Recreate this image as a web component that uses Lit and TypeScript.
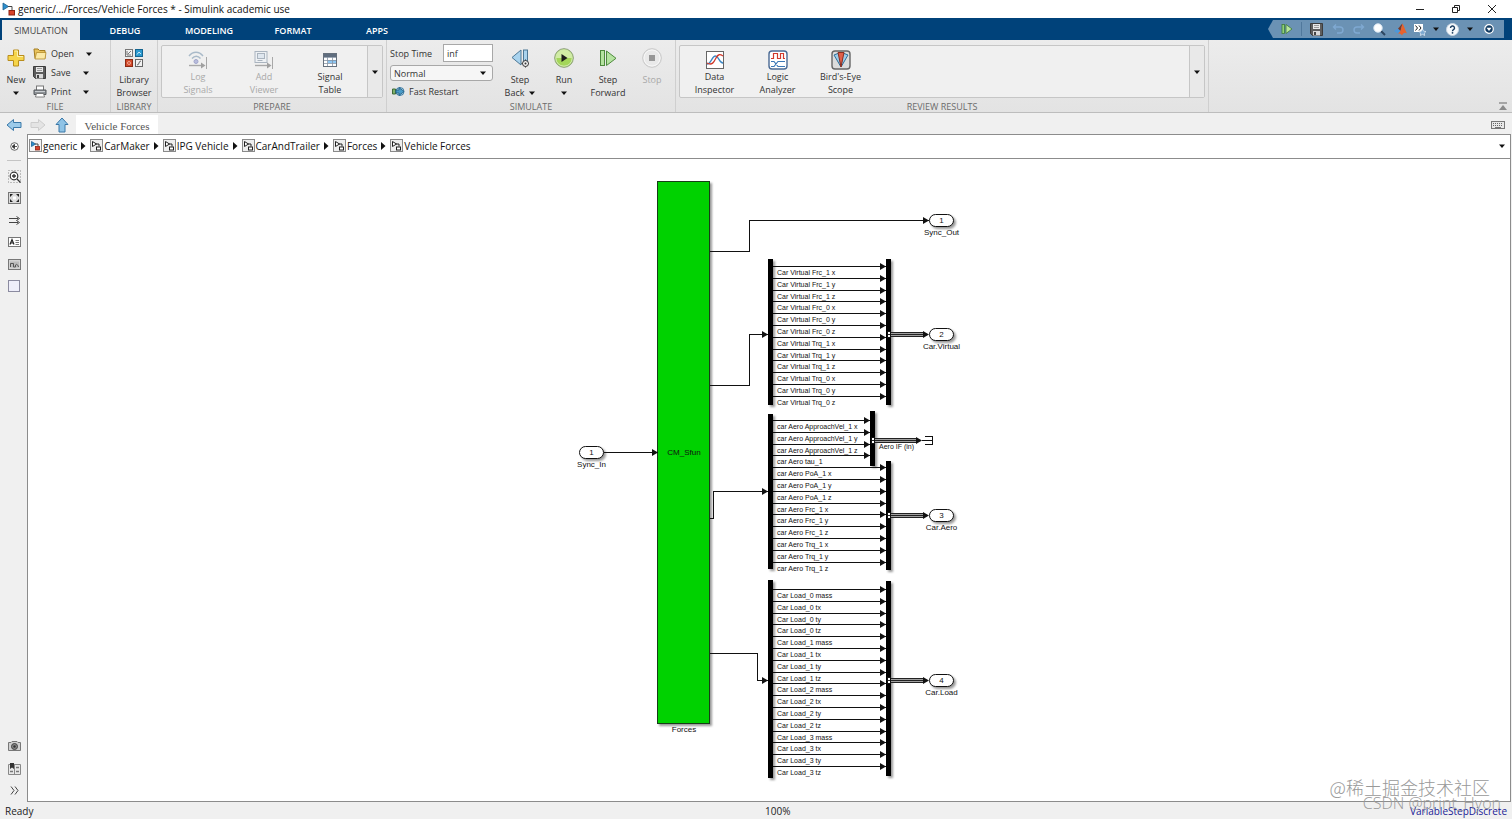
import { LitElement, html, svg, css, nothing, TemplateResult } from "lit";
import { customElement, property } from "lit/decorators.js";
import { classMap } from "lit/directives/class-map.js";

type Icon = { w: number; h: number; body: TemplateResult };

const block = svg`
  <rect x=".5" y=".5" width="12" height="12" fill="#eee" stroke="#8a8a8a"/>
  <path d="M2.500 2.500v5l4-2.500z" fill="#fff" stroke="#222"/>
  <path d="M6 5h3v2.500" fill="none" stroke="#222"/>
  <rect x="6.500" y="8" width="4" height="3" fill="#fff" stroke="#222"/>`;

const floppy = svg`
  <path d="M.5.5h12v12h-10l-2-2z" fill="#5d5d5d" stroke="#3c3c3c"/>
  <rect x="3" y="1" width="7" height="5" fill="#e8e8e8"/>
  <path d="M4 2.500h5M4 4.500h5" stroke="#9a9a9a"/>
  <rect x="3" y="8" width="7" height="4.500" fill="#d9d9d9"/>
  <rect x="4" y="9" width="2" height="3" fill="#444"/>`;

const icons: Record<string, Icon> = {
  app: { w: 14, h: 14, body: svg`
    <path d="M1 1v7l5.500-3.500z" fill="#2d8fce" stroke="#1d5f8d" stroke-width=".8"/>
    <path d="M6 4.500h4v4" fill="none" stroke="#444"/>
    <rect x="7" y="8.500" width="5.500" height="4.500" fill="#d9432a" stroke="#8d2413"/>` },
  minimize: { w: 10, h: 10, body: svg`<path d="M1 5.500h8" stroke="#222"/>` },
  restore: { w: 10, h: 10, body: svg`<path d="M1.500 3.500h5v5h-5zM3.500 3.500v-2h5v5h-2" fill="none" stroke="#222"/>` },
  close: { w: 10, h: 10, body: svg`<path d="M1 1l8 8M9 1l-8 8" stroke="#222"/>` },
  caret: { w: 6, h: 4, body: svg`<path d="M0 .5h6L3 4z" fill="#111"/>` },
  plus: { w: 18, h: 18, body: svg`
    <path d="M6.500 1h5v5.500H17v5h-5.500V17h-5v-5.500H1v-5h5.500z" fill="#f6d54a" stroke="#b98d1c"/>
    <path d="M7.500 2h3v5.500H16" fill="none" stroke="#fdf2ae"/>` },
  open: { w: 14, h: 12, body: svg`
    <path d="M1 1h4l1.500 1.500h5.500v8H2z" fill="#e9c35c" stroke="#a37c20"/>
    <path d="M3.500 4.500h9.500L12 11H2z" fill="#fbe9a6" stroke="#b48c2b" stroke-width=".8"/>` },
  save: { w: 13, h: 13, body: floppy },
  print: { w: 14, h: 13, body: svg`
    <rect x="3.500" y="1" width="7" height="5" fill="#fff" stroke="#777"/>
    <path d="M1 5h12v4.500H1z" fill="#8c9196" stroke="#55595d"/>
    <path d="M2 6.500h10" stroke="#c9cdd0"/>
    <path d="M3.500 8.500h7l1 3.500h-9z" fill="#fff" stroke="#666" stroke-width=".8"/>` },
  library: { w: 18, h: 18, body: svg`
    <rect x=".5" y=".5" width="7" height="7" fill="#f2f2f2" stroke="#777"/><path d="M2 2v4h4M3 5l3-3" stroke="#777" fill="none"/>
    <rect x="10.500" y=".5" width="7" height="7" fill="#2c9ad0" stroke="#14648f"/><path d="M12 5.500l2-2.500 2 2" stroke="#cdeaf8" fill="none"/>
    <rect x=".5" y="10.500" width="7" height="7" fill="#d2492a" stroke="#8b2913"/><circle cx="4" cy="14" r="1.500" fill="none" stroke="#f0a48f"/>
    <rect x="10.500" y="10.500" width="7" height="7" fill="#f2f2f2" stroke="#666"/><path d="M12 16c3 0 1-4 4-4" stroke="#666" fill="none"/>` },
  logSignals: { w: 20, h: 20, body: svg`
    <g fill="none" stroke="#a9bac9" stroke-width="1.400"><path d="M1 6c4-5 10-5 14 0M4 8.500c2.500-3 6-3 8.500 0"/></g>
    <circle cx="8" cy="11.500" r="2" fill="#b8bcdc" stroke="#a2a6cc"/>
    <path d="M1 15.500h12" stroke="#a8a8a8" stroke-width="1.400"/><path d="M13 12.500v6l4.500-3z" fill="#a0a0a0"/><path d="M18.500 7v12" stroke="#a8a8a8"/>` },
  addViewer: { w: 20, h: 20, body: svg`
    <rect x="1" y="1.500" width="12" height="11" fill="#eef1f4" stroke="#aab4bf"/>
    <rect x="3.500" y="3.500" width="7" height="5" fill="#dfe7ef" stroke="#aab4bf"/>
    <path d="M3.500 10.500h5" stroke="#aab4bf"/>
    <path d="M1 15.500h12" stroke="#a8a8a8" stroke-width="1.400"/><path d="M13 12.500v6l4.500-3z" fill="#a0a0a0"/><path d="M18.500 7v12" stroke="#a8a8a8"/>` },
  signalTable: { w: 14, h: 14, body: svg`
    <rect x=".5" y=".5" width="13" height="13" fill="#fff" stroke="#66707c"/>
    <rect x="1" y="1" width="12" height="3" fill="#5f6d7e"/>
    <rect x="5" y="7" width="8" height="3" fill="#8cc6f2"/>
    <path d="M1 4.500h12M1 7.500h12M1 10.500h12M4.500 4v9M9.500 4v9" stroke="#8694a4" stroke-width=".8"/>` },
  fastRestart: { w: 13, h: 11, body: svg`
    <path d="M.5 3h3v5h-3z" fill="#7fb069" stroke="#3f6b36"/>
    <circle cx="8" cy="5.500" r="4" fill="#bfdcec" stroke="#3d7ba3"/>
    <path d="M4 4h3V1.500l5 4-5 4V7H4z" fill="#4a9bc7" stroke="#1f5b80" stroke-width=".8"/>` },
  stepBack: { w: 18, h: 20, body: svg`
    <path d="M10 2v15L1 9.500z" fill="#a9d3ee" stroke="#4d7896"/>
    <rect x="12.500" y="2" width="4" height="15" fill="#a9d3ee" stroke="#4d7896"/>
    <circle cx="14.500" cy="15.500" r="3" fill="#eee" stroke="#333"/><circle cx="14.500" cy="15.500" r="1" fill="#333"/>
    <path d="M14.500 11.500v1M14.500 18.500v1M10.500 15.500h1M17.500 15.500h.5" stroke="#333"/>` },
  run: { w: 20, h: 20, body: svg`
    <circle cx="10" cy="10" r="9.300" fill="#a4d65a" stroke="#8a9a7a"/>
    <path d="M2 10a8 8 0 0 1 16 0z" fill="#e4f5c4" opacity=".7"/>
    <circle cx="10" cy="10" r="8.200" fill="none" stroke="#d5ecb4"/>
    <path d="M7.500 6v8l6-4z" fill="#1c1c1c"/>` },
  stepForward: { w: 18, h: 18, body: svg`
    <rect x="1.500" y="1.500" width="4" height="15" fill="#b5e3a0" stroke="#4f8a3e"/>
    <path d="M7.500 2v14.500L17 9.300z" fill="#b5e3a0" stroke="#4f8a3e"/>` },
  stop: { w: 20, h: 20, body: svg`
    <circle cx="10" cy="10" r="9.300" fill="#e9e9e9" stroke="#c6c6c6"/>
    <circle cx="10" cy="10" r="8" fill="none" stroke="#f7f7f7"/>
    <rect x="7" y="7" width="6" height="6" fill="#979797"/>` },
  dataInspector: { w: 18, h: 18, body: svg`
    <rect x=".5" y=".5" width="17" height="17" fill="#fff" stroke="#666"/>
    <path d="M1 13c4 0 5-8 8.500-8S13 12 17 12" fill="none" stroke="#3b86c4" stroke-width="1.300"/>
    <path d="M1 12c5 3 7-1 9-5s4-4 7-2" fill="none" stroke="#d0392b" stroke-width="1.300"/>` },
  logicAnalyzer: { w: 20, h: 20, body: svg`
    <rect x="1" y="1" width="18" height="18" rx="3" fill="#fff" stroke="#4a6a94" stroke-width="1.400"/>
    <path d="M3 8.500h2.500v-5h4v5h3v-5h3v5H17" fill="none" stroke="#d0392b" stroke-width="1.200"/>
    <path d="M3 11.500h3l4 5h7M3 16.500h3l4-5h7" fill="none" stroke="#3b78b8" stroke-width="1.200"/>` },
  birdsEye: { w: 20, h: 20, body: svg`
    <rect x="1" y="1" width="18" height="18" rx="3" fill="#dcdcdc" stroke="#666" stroke-width="1.400"/>
    <path d="M3 5l5-2 2 14z" fill="#9ccdea" stroke="#2d6f99"/><path d="M17 5l-5-2-2 14z" fill="#9ccdea" stroke="#2d6f99"/>
    <path d="M7 2.500h6L10 17z" fill="#e0604a" stroke="#8f2f20"/>` },
  qatPlay: { w: 12, h: 12, body: svg`
    <rect x="1" y="1.500" width="2.500" height="9" fill="#8fd07a" stroke="#3d7a38" stroke-width=".8"/>
    <path d="M5 1.500v9l6-4.500z" fill="#b8e69c" stroke="#3d7a38" stroke-width=".8"/>` },
  undo: { w: 12, h: 12, body: svg`<path d="M4 1.500L1.500 4 4 6.500M1.500 4H8a3 3 0 0 1 0 6H5" fill="none" stroke="#7fa9d2" stroke-width="1.400"/>` },
  redo: { w: 12, h: 12, body: svg`<path d="M8 1.500L10.500 4 8 6.500M10.500 4H4a3 3 0 0 0 0 6h3" fill="none" stroke="#7fa9d2" stroke-width="1.400"/>` },
  search: { w: 13, h: 13, body: svg`
    <path d="M7.500 7.500l4.500 4.500" stroke="#2c4660" stroke-width="2"/>
    <circle cx="5" cy="5" r="4.200" fill="#fff" stroke="#dbe7f2"/>` },
  matlab: { w: 13, h: 13, body: svg`
    <path d="M0 8l4-2.500L6.500 8 4 10.500z" fill="#4d97d8"/><path d="M4 5.500C6 4 7 1.500 8.500.5L6.500 8z" fill="#7a3a2a"/>
    <path d="M8.500.5c1.500 2 2.500 6.500 4.500 10-2-1.500-3.500-1-5 2-.8-1.500-2-2-4-2L6.500 8z" fill="#e8622c"/>` },
  shortcut: { w: 14, h: 13, body: svg`
    <rect x="1" y="1" width="9" height="8" fill="#fff"/>
    <path d="M2.500 2.500l2 2.500-2 2.500M6 2.500l2 2.500-2 2.500" fill="none" stroke="#222"/>
    <path d="M9.500 6l1.200 2.200 2.300.3-1.700 1.600.4 2.400-2.200-1.200-2.200 1.200.4-2.400L6 8.500l2.300-.3z" fill="#7aa7d0" stroke="#e8f0f8" stroke-width=".7"/>` },
  help: { w: 13, h: 13, body: svg`
    <circle cx="6.500" cy="6.500" r="6" fill="#f7fafc" stroke="#c9d6e2"/>
    <path d="M4.500 5a2 2 0 1 1 3 1.700c-.8.500-1 .8-1 1.500" fill="none" stroke="#1c3e60" stroke-width="1.400"/><circle cx="6.500" cy="9.800" r=".9" fill="#1c3e60"/>` },
  more: { w: 10, h: 10, body: svg`
    <circle cx="5" cy="5" r="4.300" fill="#123c63" stroke="#fff" stroke-width="1.200"/><path d="M2.500 3.800h5L5 7z" fill="#fff"/>` },
  collapse: { w: 8, h: 8, body: svg`<path d="M0 1h8" stroke="#8a8a8a" stroke-width="1.400"/><path d="M0 8h8L4 3z" fill="#8a8a8a"/>` },
  back: { w: 16, h: 14, body: svg`<path d="M1 7l6.500-5.500v3H15v5H7.500v3z" fill="#9ccbea" stroke="#3a78a8"/>` },
  forward: { w: 16, h: 14, body: svg`<path d="M15 7L8.500 1.500v3H1v5h7.500v3z" fill="#e4e4e4" stroke="#cdcdcd"/>` },
  up: { w: 14, h: 16, body: svg`<path d="M7 1l6 6.500h-3V15H4V7.500H1z" fill="#8fc3e6" stroke="#3a78a8"/>` },
  keyboard: { w: 14, h: 8, body: svg`
    <rect x=".5" y=".5" width="13" height="7" fill="#e8e8e8" stroke="#777"/>
    <path d="M2 2.500h10M2 4.500h10" stroke="#666" stroke-dasharray="1 1"/><path d="M4 6.500h6" stroke="#777"/>` },
  model: { w: 13, h: 13, body: svg`
    <rect x=".5" y=".5" width="12" height="12" fill="#f4f4f4" stroke="#8a8a8a"/>
    <path d="M2.500 2.500v5l4-2.500z" fill="#2d8fce" stroke="#1d5f8d" stroke-width=".8"/>
    <path d="M6 5h3v2" fill="none" stroke="#444"/>
    <rect x="6.500" y="7.500" width="4" height="3.500" fill="#d9432a" stroke="#8d2413" stroke-width=".8"/>` },
  block: { w: 13, h: 13, body: block },
  crumb: { w: 5, h: 8, body: svg`<path d="M0 0v8l4.500-4z" fill="#111"/>` },
  hide: { w: 9, h: 9, body: svg`<circle cx="4.500" cy="4.500" r="3.800" fill="#fff" stroke="#444" stroke-width=".8"/><path d="M4.500 2.300L2 4.500l2.500 2.200zM4 4.500h3" fill="#333" stroke="#333" stroke-width=".8"/>` },
  zoomIn: { w: 13, h: 13, body: svg`
    <path d="M.5.5h12v12H.5z" fill="none" stroke="#888" stroke-dasharray="1 2"/>
    <circle cx="6" cy="6" r="3.800" fill="#fff" stroke="#333" stroke-width="1.200"/><path d="M4 6h4M6 4v4M9 9l3.500 3.500" stroke="#333" stroke-width="1.300"/>` },
  fit: { w: 13, h: 12, body: svg`
    <rect x=".5" y=".5" width="12" height="11" fill="#dcdcdc" stroke="#777"/>
    <path d="M2 2h3L2 5zM11 2H8l3 3zM2 10h3L2 7zM11 10H8l3-3z" fill="#222"/><rect x="5" y="4.500" width="3" height="3" fill="#fff"/>` },
  route: { w: 13, h: 9, body: svg`<path d="M1 2.500h9M1 6.500h9" stroke="#444"/><path d="M8.500.5l3 2-3 2M8.500 4.500l3 2-3 2" fill="none" stroke="#444"/>` },
  annotation: { w: 13, h: 10, body: svg`
    <rect x=".5" y=".5" width="12" height="9" fill="#fff" stroke="#777"/>
    <path d="M2 7.500L4 2.500l2 5M2.800 6h2.400" fill="none" stroke="#222" stroke-width="1.200"/><path d="M7.500 3.500H11M7.500 5.500H11M7.500 7.500H11" stroke="#555" stroke-width=".8"/>` },
  image: { w: 13, h: 11, body: svg`
    <rect x=".5" y=".5" width="12" height="10" fill="#d4d4d4" stroke="#777"/><rect x="2" y="2.500" width="9" height="6" fill="#bbb"/>
    <path d="M2.500 8V4.500h3V8h2V6c1-1 2-1 3 2" fill="none" stroke="#555"/>` },
  area: { w: 12, h: 12, body: svg`<rect x=".5" y=".5" width="11" height="11" fill="#eeeefa" stroke="#8b8ba0"/>` },
  camera: { w: 13, h: 10, body: svg`
    <path d="M.5 1.500h2.500l1-1h5l1 1h2.500v8H.5z" fill="#d0d0d0" stroke="#777"/>
    <circle cx="6.500" cy="5.500" r="3" fill="#888" stroke="#444"/><circle cx="6.500" cy="5.500" r="1.200" fill="#333"/>` },
  explorer: { w: 13, h: 13, body: svg`
    <path d="M.5 2.500h12v10H.5z" fill="#e8e8e8" stroke="#888"/><path d="M6.500 3v9" stroke="#888"/>
    <path d="M2 1h4v6L4 5.500 2 7z" fill="#333"/><path d="M8 5.500h3M8 9.500h3M2 9.500h3" stroke="#777" stroke-width="1.400"/>` },
  expand: { w: 9, h: 9, body: svg`<path d="M1 .5l3 4-3 4M5 .5l3 4-3 4" fill="none" stroke="#444"/>` },
};

const icon = (name: string) => {
  const i = icons[name];
  return html`<svg class="icon" width=${i.w} height=${i.h} viewBox="0 0 ${i.w} ${i.h}" aria-hidden="true">${i.body}</svg>`;
};

const shared = css`
  :host { display: block; box-sizing: border-box; }
  *, *::before, *::after { box-sizing: border-box; }
  button, input, select { font: inherit; color: inherit; margin: 0; }
  button { display: flex; align-items: center; justify-content: center; padding: 0; border: 0; background: none; white-space: nowrap; }
  .icon { display: block; flex: none; }
`;

@customElement("title-bar")
class TitleBar extends LitElement {
  static styles = [shared, css`
    .bar { display: flex; align-items: center; height: 18px; padding: 0 2px 0 2px; background: #fff; color: #111; font-size: 10px; }
    .name { flex: 1; margin: 0 0 0 2px; font-size: 10px; font-weight: 400; line-height: 18px; }
    .control { width: 36px; height: 16px; }
  `];
  render() {
    return html`<header class="bar">
      ${icon("app")}
      <h1 class="name">generic/.../Forces/Vehicle Forces * - Simulink academic use</h1>
      ${[["minimize", "Minimize"], ["restore", "Restore"], ["close", "Close"]].map(([i, l]) =>
        html`<button class="control" aria-label=${l}>${icon(i)}</button>`)}
    </header>`;
  }
}

@customElement("tab-strip")
class TabStrip extends LitElement {
  static styles = [shared, css`
    .strip { display: flex; justify-content: space-between; height: 22px; padding: 2px 8px 0 2px; background: #00427a; }
    .tabs { display: flex; gap: 6px; }
    .tab { width: 78px; height: 20px; color: #fff; font-weight: 600; }
    .tab.active { background: #ececec; color: #444; font-weight: 400; }
    .quick { display: flex; align-items: center; height: 18px; padding: 0 3px 0 8px; background: #6b92b4; clip-path: polygon(5px 0, 100% 0, 100% 100%, 5px 100%, 0 50%); }
    .tool { width: 21px; height: 18px; }
    .tool.small { width: 18px; }
    .tool.wide { width: 25px; }
    .tool.drop { width: 13px; }
    .rule { width: 1px; height: 14px; margin: 0 4px; background: #50789c; }
  `];
  render() {
    const tool = (i: string, label: string, size = "") =>
      html`<button class="tool ${size}" aria-label=${label}>${icon(i)}</button>`;
    return html`<div class="strip">
      <nav class="tabs">
        ${["SIMULATION", "DEBUG", "MODELING", "FORMAT", "APPS"].map((t, n) =>
          html`<button class=${classMap({ tab: true, active: n === 0 })}>${t}</button>`)}
      </nav>
      <div class="quick">
        ${tool("qatPlay", "Step forward")}<span class="rule"></span>
        ${tool("save", "Save")}${tool("undo", "Undo")}${tool("redo", "Redo")}${tool("search", "Search")}
        ${tool("matlab", "MATLAB")}${tool("shortcut", "Shortcuts", "small")}${tool("caret", "Shortcut menu", "drop")}
        ${tool("help", "Help")}${tool("caret", "Help menu", "drop")}${tool("more", "More", "wide")}
      </div>
    </div>`;
  }
}

@customElement("tool-button")
class ToolButton extends LitElement {
  @property() icon = "";
  @property() label = "";
  @property({ type: Boolean }) menu = false;
  @property({ type: Boolean }) inline = false;
  @property({ type: Boolean }) disabled = false;
  static styles = [shared, css`
    button { flex-direction: column; justify-content: flex-start; width: 100%; line-height: 13px; }
    .picture { display: flex; align-items: center; justify-content: center; height: 20px; margin-bottom: var(--picture-gap, 0); }
    .line { display: flex; align-items: center; gap: 5px; height: 13px; }
    button:disabled { color: #a9a9a9; }
  `];
  render() {
    const lines = this.label.split("|");
    return html`<button ?disabled=${this.disabled}>
      <span class="picture">${icon(this.icon)}</span>
      ${lines.map((l, n) => html`<span class="line">${l}${this.inline && n === lines.length - 1 ? icon("caret") : nothing}</span>`)}
      ${this.menu ? html`<span class="line">${icon("caret")}</span>` : nothing}
    </button>`;
  }
}

@customElement("ribbon-bar")
class RibbonBar extends LitElement {
  static styles = [shared, css`
    .ribbon { display: flex; height: 73px; background: linear-gradient(#ececec, #e3e3e3); border-bottom: 1px solid #bdbdbd; color: #333; }
    .group { display: flex; flex-direction: column; border-right: 1px solid #cfcfcf; }
    .content { display: flex; height: 62px; --picture-gap: 5px; }
    .label { margin: 0; font-size: 9px; font-weight: 400; line-height: 11px; text-align: center; color: #6c6c6c; }
    .file { width: 111px; }
    .library { width: 47px; }
    .prepare { width: 229px; }
    .simulate { width: 289px; }
    .review { flex: 0 1 533px; }
    .big { padding-top: 8px; }
    .new { width: 32px; }
    .rows { display: flex; flex-direction: column; padding-top: 4px; }
    .row { display: flex; align-items: center; height: 19px; }
    .command { justify-content: flex-start; gap: 4px; width: 44px; height: 19px; }
    .glyph { display: flex; justify-content: center; width: 15px; }
    .drop { width: 20px; height: 19px; }
    .open .drop { width: 26px; }
    .gallery { display: flex; flex: 1; margin: 5px 3px 3px; border: 1px solid #c6c6c6; border-radius: 2px; background: #f0f0f0; --picture-gap: 0; }
    .items { display: flex; flex: 1; padding: 4px 3px 0; }
    .prepare .item { width: 66px; }
    .review .item { width: 63px; }
    .expand { width: 15px; height: 100%; border-left: 1px solid #c6c6c6; background: #e9e9e9; }
    .form { display: flex; flex-direction: column; width: 111px; padding: 4px 5px 0 3px; }
    .time { display: flex; align-items: center; justify-content: space-between; height: 18px; }
    .value { width: 50px; height: 18px; padding: 0 3px; border: 1px solid #a8a8a8; background: #fff; }
    .mode { display: grid; align-items: center; margin-top: 3px; }
    .mode select { grid-area: 1 / 1; width: 100%; height: 16px; padding: 0 3px; appearance: none; border: 1px solid #a8a8a8; border-radius: 3px; background: #f6f6f6; }
    .mode .icon { grid-area: 1 / 1; justify-self: end; margin-right: 7px; pointer-events: none; }
    .restart { justify-content: flex-start; gap: 4px; height: 19px; margin-top: 1px; padding-left: 2px; }
    .step { width: 44px; }
    .rest { display: flex; flex: 1; align-items: flex-end; justify-content: flex-end; padding: 0 5px 2px 0; }
  `];
  render() {
    const row = (i: string, label: string) => html`<div class="row ${i}">
      <button class="command"><span class="glyph">${icon(i)}</span>${label}</button>
      <button class="drop" aria-label="${label} menu">${icon("caret")}</button></div>`;
    const expand = html`<button class="expand" aria-label="Show more">${icon("caret")}</button>`;
    return html`<div class="ribbon">
      <section class="group file">
        <div class="content">
          <tool-button class="big new" icon="plus" label="New" menu></tool-button>
          <div class="rows">${row("open", "Open")}${row("save", "Save")}${row("print", "Print")}</div>
        </div>
        <h2 class="label">FILE</h2>
      </section>
      <section class="group library">
        <div class="content"><tool-button class="big library" icon="library" label="Library|Browser"></tool-button></div>
        <h2 class="label">LIBRARY</h2>
      </section>
      <section class="group prepare">
        <div class="content"><div class="gallery">
          <div class="items">
            <tool-button class="item" icon="logSignals" label="Log|Signals" disabled></tool-button>
            <tool-button class="item" icon="addViewer" label="Add|Viewer" disabled></tool-button>
            <tool-button class="item" icon="signalTable" label="Signal|Table"></tool-button>
          </div>${expand}
        </div></div>
        <h2 class="label">PREPARE</h2>
      </section>
      <section class="group simulate">
        <div class="content">
          <div class="form">
            <div class="time"><label for="stop">Stop Time</label><input id="stop" class="value" value="inf"></div>
            <div class="mode"><select aria-label="Simulation mode"><option>Normal</option><option>Accelerator</option></select>${icon("caret")}</div>
            <button class="restart">${icon("fastRestart")}Fast Restart</button>
          </div>
          <tool-button class="big step" icon="stepBack" label="Step|Back" inline></tool-button>
          <tool-button class="big step" icon="run" label="Run" menu></tool-button>
          <tool-button class="big step" icon="stepForward" label="Step|Forward"></tool-button>
          <tool-button class="big step" icon="stop" label="Stop" disabled></tool-button>
        </div>
        <h2 class="label">SIMULATE</h2>
      </section>
      <section class="group review">
        <div class="content"><div class="gallery">
          <div class="items">
            <tool-button class="item" icon="dataInspector" label="Data|Inspector"></tool-button>
            <tool-button class="item" icon="logicAnalyzer" label="Logic|Analyzer"></tool-button>
            <tool-button class="item" icon="birdsEye" label="Bird's-Eye|Scope"></tool-button>
          </div>${expand}
        </div></div>
        <h2 class="label">REVIEW RESULTS</h2>
      </section>
      <div class="rest"><button aria-label="Collapse ribbon">${icon("collapse")}</button></div>
    </div>`;
  }
}

type Point = [number, number];
const pitch = 11.8;
const rowY = (top: number, n: number) => top + Math.round(n * pitch);
const axes = (names: string[], parts: string[]) => names.flatMap((n) => parts.map((p) => `${n} ${p}`));

const buses = [
  {
    top: 259, bottom: 405, first: 266, sinks: [{ x: 886, top: 259, bottom: 405, from: 0, to: 12 }],
    rows: axes(["Car Virtual Frc_1", "Car Virtual Frc_0", "Car Virtual Trq_1", "Car Virtual Trq_0"], ["x", "y", "z"]),
  },
  {
    top: 414, bottom: 569, first: 420,
    sinks: [
      { x: 870, top: 411, bottom: 466, from: 0, to: 4 },
      { x: 886, top: 461, bottom: 570, from: 4, to: 13 },
    ],
    rows: [
      ...axes(["car Aero ApproachVel_1"], ["x", "y", "z"]), "car Aero tau_1",
      ...axes(["car Aero PoA_1", "car Aero Frc_1", "car Aero Trq_1"], ["x", "y", "z"]),
    ],
  },
  {
    top: 580, bottom: 778, first: 589, sinks: [{ x: 886, top: 581, bottom: 776, from: 0, to: 16 }],
    rows: axes(["Car Load_0", "Car Load_1", "Car Load_2", "Car Load_3"], ["mass", "tx", "ty", "tz"]),
  },
];

@customElement("model-canvas")
class ModelCanvas extends LitElement {
  static styles = [shared, css`
    :host { display: flex; align-items: center; justify-content: center; overflow: hidden; background: #fff; }
    .diagram { flex: none; display: block; font-family: "Liberation Sans", Arial, sans-serif; font-size: 8px; fill: #111; }
    .wire { fill: none; stroke: #111; shape-rendering: crispEdges; }
    .bar { fill: #000; shape-rendering: crispEdges; }
    .forces { fill: #00d200; stroke: #173d17; shape-rendering: crispEdges; }
    .port { fill: #fff; stroke: #111; }
    .lifted { filter: drop-shadow(2px 2px 1px #0006); }
    .mid { text-anchor: middle; }
    .signal { font-size: 7px; }
    .bus { fill: none; stroke: #222; shape-rendering: crispEdges; }
    .core { fill: #a0a0a0; shape-rendering: crispEdges; }
  `];
  arrow(x: number, y: number) {
    return svg`<path d="M${x - 6} ${y - 3}v7l6-3.500z"/>`;
  }
  wire(points: Point[]) {
    const [x, y] = points[points.length - 1];
    return svg`<path class="wire" d="M${points.map(([a, b]) => `${a} ${b + 0.5}`).join("L")}"/>${this.arrow(x, y)}`;
  }
  pill(x: number, y: number, n: number, name: string) {
    return svg`<rect class="port lifted" x=${x + 0.5} y=${y - 5.5} width="24" height="12" rx="6"/>
      <text class="mid" x=${x + 12.5} y=${y + 3}>${n}</text><text class="mid" x=${x + 12.5} y=${y + 15}>${name}</text>`;
  }
  bar(x: number, top: number, bottom: number) {
    return svg`<rect class="bar lifted" x=${x} y=${top} width="5" height=${bottom - top}/>`;
  }
  bus(x: number, y: number, end: number) {
    return svg`<rect class="port" x=${x + 1.5} y=${y - 2.5} width="3" height="6"/><path class="bus" d="M${x + 2} ${y + 0.5}h2"/>
      <rect class="core" x=${x + 5} y=${y - 1} width=${end - x - 10} height="3"/>
      <path class="bus" d="M${x + 5} ${y - 1.5}H${end - 5}M${x + 5} ${y + 2.5}H${end - 5}M${x + 5} ${y + 0.5}H${end - 5}"/>${this.arrow(end, y)}`;
  }
  render() {
    return html`<svg class="diagram" width="400" height="620" viewBox="569 170 400 620" role="img" aria-label="Vehicle Forces block diagram">
      <rect class="forces lifted" x="657.5" y="181.5" width="52" height="542"/>
      <text class="mid" x="684" y="455">CM_Sfun</text>
      <text class="mid" x="684" y="732">Forces</text>
      ${this.pill(579, 452, 1, "Sync_In")}
      ${this.wire([[604, 452], [658, 452]])}
      ${this.wire([[710, 251], [749.5, 251], [749.5, 220], [929, 220]])}
      ${this.wire([[710, 385], [749.5, 385], [749.5, 334], [768, 334]])}
      ${this.wire([[710, 518], [713.5, 518], [713.5, 491], [768, 491]])}
      ${this.wire([[710, 653], [757.5, 653], [757.5, 680], [768, 680]])}
      ${buses.map((b) => svg`
        ${this.bar(768, b.top, b.bottom)}
        ${b.sinks.map((s) => svg`${this.bar(s.x, s.top, s.bottom)}
          ${b.rows.slice(s.from, s.to).map((_, n) => this.wire([[773, rowY(b.first, s.from + n)], [s.x, rowY(b.first, s.from + n)]]))}`)}
        ${b.rows.map((r, n) => svg`<text class="signal" x="777" y=${rowY(b.first, n) + 9}>${r}</text>`)}`)}
      ${this.bus(886, 334, 929)}${this.bus(870, 440, 922)}${this.bus(886, 515, 929)}${this.bus(886, 680, 929)}
      <path class="wire" d="M922 440.5H932M925 436.5H932.5V444.500H925"/>
      <text class="signal" x="879" y="449">Aero IF (in)</text>
      ${this.pill(929, 220, 1, "Sync_Out")}
      ${this.pill(929, 334, 2, "Car.Virtual")}
      ${this.pill(929, 515, 3, "Car.Aero")}
      ${this.pill(929, 680, 4, "Car.Load")}
    </svg>`;
  }
}

@customElement("app-root")
class AppRoot extends LitElement {
  static styles = [shared, css`
    :host { display: flex; flex-direction: column; position: relative; height: 100vh; overflow: hidden; background: #f0f0f0; color: #222; font-family: "Open Sans", "Noto Sans", sans-serif; font-size: 9px; }
    .documents { display: flex; align-items: flex-end; height: 21px; padding: 0 7px 0 2px; }
    .move { width: 24px; height: 18px; }
    .document { width: 82px; height: 19px; margin-left: 2px; padding-top: 2px; background: #fff; font-family: "Liberation Serif", serif; font-size: 11px; color: #555; }
    .keys { height: 18px; margin-left: auto; }
    .main { display: flex; flex: 1; min-height: 0; padding-right: 1px; }
    .side { display: flex; flex-direction: column; justify-content: space-between; width: 27px; padding: 1px 0; }
    .stack { display: flex; flex-direction: column; }
    .tool { width: 28px; height: 22px; }
    .rule { width: 14px; height: 1px; margin: 3px 7px 4px; background: #c4c4c4; }
    .editor { display: flex; flex: 1; flex-direction: column; min-width: 0; border: 1px solid #8c8c8c; }
    .path { display: flex; align-items: center; height: 24px; padding: 0 5px 2px 1px; border-bottom: 1px solid #8c8c8c; background: #fff; color: #111; font-size: 10px; }
    .crumb { display: flex; align-items: center; gap: 1px; color: inherit; text-decoration: none; white-space: nowrap; }
    .arrow { display: flex; justify-content: center; width: 13px; }
    .history { height: 20px; margin-left: auto; }
    .canvas { flex: 1; min-height: 0; }
    .status { display: grid; grid-template-columns: calc(50% + 9px) 1fr auto; align-items: center; height: 17px; padding: 1px 5px 0; font-size: 10px; line-height: 16px; }
    .solver { color: #1a1a96; text-decoration: none; }
    .mark { position: absolute; right: 11px; bottom: 8px; display: flex; flex-direction: column; align-items: flex-end; pointer-events: none; color: #999; font-weight: 300; }
    .mark-top { margin-right: 11px; font-family: "Noto Sans CJK SC", sans-serif; font-size: 18px; line-height: 18px; }
    .mark-bottom { font-size: 16px; line-height: 15px; }
  `];
  render() {
    const side = (list: string[][]) => list.map(([i, l]) => html`<button class="tool" aria-label=${l}>${icon(i)}</button>`);
    const crumbs = ["generic", "CarMaker", "IPG Vehicle", "CarAndTrailer", "Forces", "Vehicle Forces"];
    return html`
      <title-bar></title-bar>
      <tab-strip></tab-strip>
      <ribbon-bar></ribbon-bar>
      <div class="documents">
        <button class="move" aria-label="Back">${icon("back")}</button>
        <button class="move" aria-label="Forward">${icon("forward")}</button>
        <button class="move" aria-label="Up to parent">${icon("up")}</button>
        <button class="document">Vehicle Forces</button>
        <button class="keys" aria-label="Keyboard shortcuts">${icon("keyboard")}</button>
      </div>
      <main class="main">
        <aside class="side">
          <div class="stack">
            ${side([["hide", "Hide browser"]])}
            <div class="rule"></div>
            ${side([["zoomIn", "Zoom"], ["fit", "Fit to view"], ["route", "Sample time"], ["annotation", "Annotation"], ["image", "Image"], ["area", "Area"]])}
          </div>
          <div class="stack">${side([["camera", "Screenshot"], ["explorer", "Model browser"], ["expand", "More"]])}</div>
        </aside>
        <section class="editor">
          <nav class="path">
            ${crumbs.map((c, n) => html`
              ${n ? html`<span class="arrow">${icon("crumb")}</span>` : nothing}
              <a class="crumb" href="#">${icon(n ? "block" : "model")}${c}</a>`)}
            <button class="history" aria-label="Path history">${icon("caret")}</button>
          </nav>
          <model-canvas class="canvas"></model-canvas>
        </section>
      </main>
      <footer class="status"><span>Ready</span><span>100%</span><a class="solver" href="#">VariableStepDiscrete</a></footer>
      <div class="mark"><span class="mark-top">@稀土掘金技术社区</span><span class="mark-bottom">CSDN @print_Hyon</span></div>
    `;
  }
}
